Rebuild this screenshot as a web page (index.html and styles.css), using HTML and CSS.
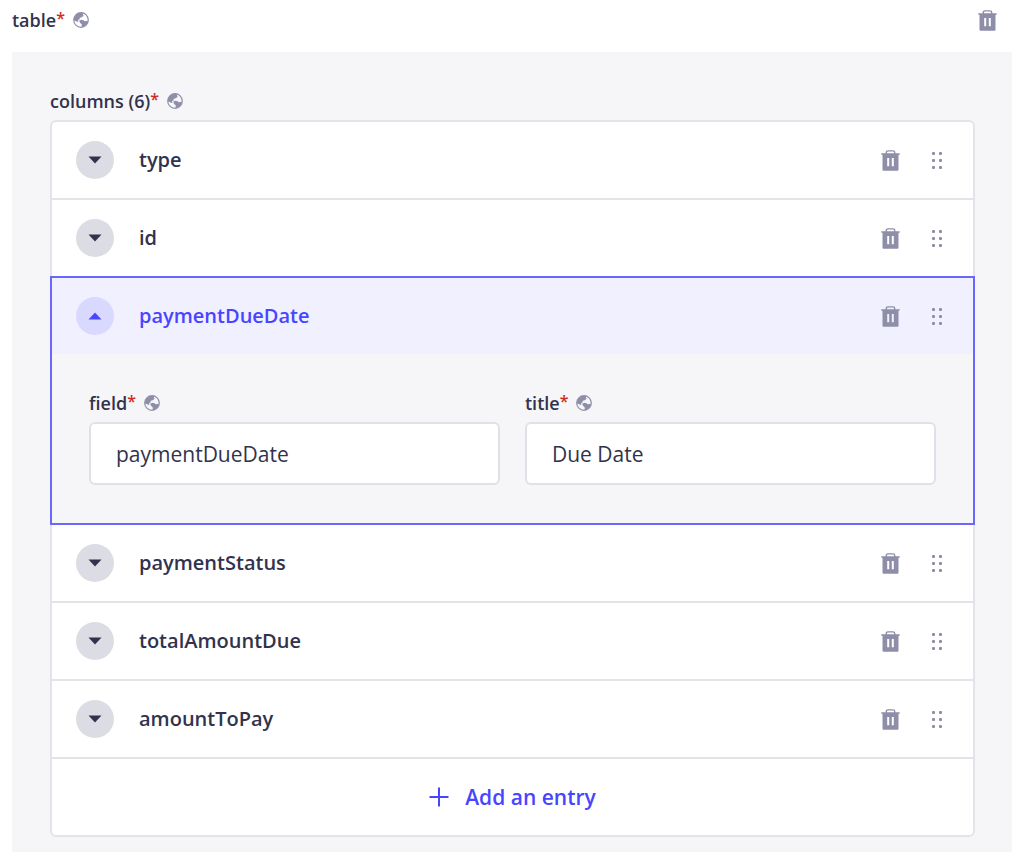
FILE: index.html
```
<!DOCTYPE html>
<html lang="en">
<head>
<meta charset="utf-8">
<meta name="viewport" content="width=device-width, initial-scale=1">
<title>table</title>
<link rel="stylesheet" href="styles.css">
</head>
<body>
<svg class="sprite" aria-hidden="true">
  <symbol id="globe" viewBox="0 0 16 16">
    <circle cx="8" cy="8" r="7.3" fill="none" stroke="currentColor" stroke-width="1.2"/>
    <path fill="currentColor" d="M1 7.2C1.5 3.6 4.5.8 8 .7l2.600.500-.8 1.500.9 1.100-2 1.500-1.900.5-.3 1.600-1.600.6.8 1.600L4.500 9.800 1 8.500z"/>
    <path fill="currentColor" d="M6.200 8.700l2-.9 2.300.4 1.300 1.100 3.200-.6c-.3 3.300-3.100 6.100-6.500 6.400l.3-2.700-1.800-1.700z"/>
  </symbol>
  <symbol id="trash" viewBox="0 0 19 21">
    <path fill="none" stroke="currentColor" stroke-width="1.400" d="M5.300 4V2.600Q5.300.9 7 .9h5q1.700 0 1.700 1.700V4"/>
    <path fill="currentColor" fill-rule="evenodd" d="M.3 3.300h18.400v1.500h-1.200v15q0 1-1 1h-14q-1 0-1-1v-15H.3zM6.200 8v8.200h2V8zm4.600 0v8.200h2V8z"/>
  </symbol>
  <symbol id="dots" viewBox="0 0 11 17">
    <g fill="currentColor"><rect width="3" height="3" rx="1"/><rect x="7" width="3" height="3" rx="1"/><rect y="7" width="3" height="3" rx="1"/><rect x="7" y="7" width="3" height="3" rx="1"/><rect y="14" width="3" height="3" rx="1"/><rect x="7" y="14" width="3" height="3" rx="1"/></g>
  </symbol>
  <symbol id="caret" viewBox="0 0 14 8"><path fill="currentColor" d="M.5.500h13L7 7.500z"/></symbol>
  <symbol id="plus" viewBox="0 0 20 20"><path fill="none" stroke="currentColor" stroke-width="2" d="M10 .5v19M.5 10h19"/></symbol>
</svg>
<main class="page">
  <header class="page-header">
    <h1 class="label">table<span class="required">*</span><svg class="globe"><use href="#globe"/></svg></h1>
    <button class="icon-button" type="button" aria-label="Delete table"><svg class="trash"><use href="#trash"/></svg></button>
  </header>
  <section class="panel">
    <h2 class="label">columns (6)<span class="required">*</span><svg class="globe"><use href="#globe"/></svg></h2>
    <ul class="entries">
      <li class="entry"><div class="entry-header">
        <button class="toggle" type="button" aria-expanded="false"><span class="disc"><svg class="caret"><use href="#caret"/></svg></span><span>type</span></button>
        <button class="icon-button" type="button" aria-label="Delete"><svg class="trash"><use href="#trash"/></svg></button>
        <button class="icon-button" type="button" aria-label="Drag"><svg class="dots"><use href="#dots"/></svg></button>
      </div></li>
      <li class="entry"><div class="entry-header">
        <button class="toggle" type="button" aria-expanded="false"><span class="disc"><svg class="caret"><use href="#caret"/></svg></span><span>id</span></button>
        <button class="icon-button" type="button" aria-label="Delete"><svg class="trash"><use href="#trash"/></svg></button>
        <button class="icon-button" type="button" aria-label="Drag"><svg class="dots"><use href="#dots"/></svg></button>
      </div></li>
      <li class="entry open"><div class="entry-header">
        <button class="toggle" type="button" aria-expanded="true"><span class="disc"><svg class="caret"><use href="#caret"/></svg></span><span>paymentDueDate</span></button>
        <button class="icon-button" type="button" aria-label="Delete"><svg class="trash"><use href="#trash"/></svg></button>
        <button class="icon-button" type="button" aria-label="Drag"><svg class="dots"><use href="#dots"/></svg></button>
      </div>
      <div class="fields">
        <div class="field">
          <label class="label" for="field">field<span class="required">*</span><svg class="globe"><use href="#globe"/></svg></label>
          <input class="input" id="field" type="text" value="paymentDueDate">
        </div>
        <div class="field">
          <label class="label" for="title">title<span class="required">*</span><svg class="globe"><use href="#globe"/></svg></label>
          <input class="input" id="title" type="text" value="Due Date">
        </div>
      </div></li>
      <li class="entry"><div class="entry-header">
        <button class="toggle" type="button" aria-expanded="false"><span class="disc"><svg class="caret"><use href="#caret"/></svg></span><span>paymentStatus</span></button>
        <button class="icon-button" type="button" aria-label="Delete"><svg class="trash"><use href="#trash"/></svg></button>
        <button class="icon-button" type="button" aria-label="Drag"><svg class="dots"><use href="#dots"/></svg></button>
      </div></li>
      <li class="entry"><div class="entry-header">
        <button class="toggle" type="button" aria-expanded="false"><span class="disc"><svg class="caret"><use href="#caret"/></svg></span><span>totalAmountDue</span></button>
        <button class="icon-button" type="button" aria-label="Delete"><svg class="trash"><use href="#trash"/></svg></button>
        <button class="icon-button" type="button" aria-label="Drag"><svg class="dots"><use href="#dots"/></svg></button>
      </div></li>
      <li class="entry"><div class="entry-header">
        <button class="toggle" type="button" aria-expanded="false"><span class="disc"><svg class="caret"><use href="#caret"/></svg></span><span>amountToPay</span></button>
        <button class="icon-button" type="button" aria-label="Delete"><svg class="trash"><use href="#trash"/></svg></button>
        <button class="icon-button" type="button" aria-label="Drag"><svg class="dots"><use href="#dots"/></svg></button>
      </div></li>
      <li><button class="add" type="button"><svg class="plus"><use href="#plus"/></svg>Add an entry</button></li>
    </ul>
  </section>
</main>
</body>
</html>
```
FILE: styles.css
```
* { box-sizing: border-box; }
body {
  margin: 0;
  background: #fff;
  color: #32324d;
  font-family: "Open Sans", "Noto Sans", sans-serif;
}
button { border: 0; padding: 0; background: none; color: inherit; font: inherit; cursor: pointer; }
svg { display: block; flex: none; }
.sprite { position: absolute; width: 0; height: 0; }
.page { display: flex; flex-direction: column; min-height: 100vh; padding: 0 16px 0 12px; }
.page-header {
  display: flex;
  align-items: center;
  justify-content: space-between;
  padding: 9px 15px 21px 0;
}
.label {
  display: flex;
  align-items: center;
  height: 22px;
  margin: 0;
  font-size: 18px;
  font-weight: 600;
  line-height: 22px;
}
.required { align-self: flex-start; color: #d02b20; font-size: 16px; line-height: 18px; }
.globe { width: 16px; height: 16px; margin-left: 8px; color: #8e8ea9; }
.icon-button { display: flex; color: #8e8ea9; }
.trash { width: 19px; height: 21px; }
.dots { width: 11px; height: 17px; }
.panel {
  flex: 1;
  display: flex;
  flex-direction: column;
  gap: 8px;
  padding: 38px 37px 15px 38px;
  background: #f6f6f9;
}
.entries {
  margin: 0;
  padding: 0;
  list-style: none;
  background: #fff;
  border: 2px solid #e3e3ea;
  border-radius: 6px;
}
.entry { border-bottom: 2px solid #e3e3ea; }
.entry-header {
  display: flex;
  align-items: center;
  gap: 32px;
  height: 76px;
  padding: 0 30px 0 24px;
}
.toggle {
  flex: 1;
  display: flex;
  align-items: center;
  gap: 25px;
  font-size: 20px;
  font-weight: 600;
  line-height: 28px;
}
.disc {
  display: grid;
  place-items: center;
  width: 38px;
  height: 38px;
  border-radius: 50%;
  background: #dcdce4;
}
.caret { width: 14px; height: 8px; }
.open {
  position: relative;
  margin: -2px -2px 0;
  border: 2px solid #6a67ff;
  background: #f6f6f9;
}
.open .entry-header { background: #f0f0ff; }
.open .toggle { color: #4945ff; }
.open .disc { background: #d9d8ff; }
.open .caret { transform: rotate(180deg); }
.fields {
  display: grid;
  grid-template-columns: 1fr 1fr;
  gap: 25px;
  padding: 38px 37px;
}
.field { display: flex; flex-direction: column; gap: 8px; min-width: 0; }
.input {
  width: 100%;
  height: 63px;
  padding: 0 25px;
  border: 2px solid #e0e0e8;
  border-radius: 6px;
  background: #fff;
  color: #32324d;
  font: 21px/28px "Open Sans", "Noto Sans", sans-serif;
}
.add {
  display: flex;
  align-items: center;
  justify-content: center;
  gap: 16px;
  width: 100%;
  height: 76px;
  color: #4945ff;
  font-size: 21px;
  font-weight: 600;
}
.plus { width: 20px; height: 20px; }
```
